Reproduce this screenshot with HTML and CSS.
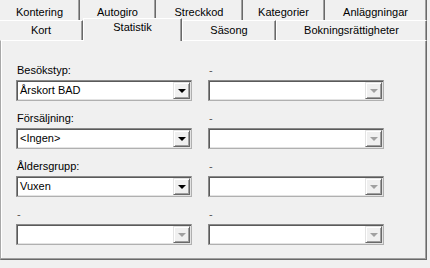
FILE: index.html
```html
<!DOCTYPE html>
<html>
<head>
<meta charset="utf-8">
<link rel="stylesheet" href="styles.css">
</head>
<body>
<div class="window">
  <div class="tabs">
    <div class="row row1">
      <div class="tab w80">Kontering</div>
      <div class="tab w76">Autogiro</div>
      <div class="tab w87">Streckkod</div>
      <div class="tab w82">Kategorier</div>
      <div class="tab w102">Anläggningar</div>
    </div>
    <div class="row row2">
      <div class="tab w83">Kort</div>
      <div class="tab w99 selected">Statistik</div>
      <div class="tab w94">Säsong</div>
      <div class="tab w151">Bokningsrättigheter</div>
    </div>
  </div>
  <div class="panel">
    <div class="grid">
      <div class="field">
        <div class="label">Besökstyp:</div>
        <div class="combo"><span class="value">Årskort BAD</span><span class="btn"><span class="arrow"></span></span></div>
      </div>
      <div class="field">
        <div class="label dash">-</div>
        <div class="combo disabled"><span class="value"></span><span class="btn"><span class="arrow"></span></span></div>
      </div>
      <div class="field">
        <div class="label">Försäljning:</div>
        <div class="combo"><span class="value">&lt;Ingen&gt;</span><span class="btn"><span class="arrow"></span></span></div>
      </div>
      <div class="field">
        <div class="label dash">-</div>
        <div class="combo disabled"><span class="value"></span><span class="btn"><span class="arrow"></span></span></div>
      </div>
      <div class="field">
        <div class="label">Åldersgrupp:</div>
        <div class="combo"><span class="value">Vuxen</span><span class="btn"><span class="arrow"></span></span></div>
      </div>
      <div class="field">
        <div class="label dash">-</div>
        <div class="combo disabled"><span class="value"></span><span class="btn"><span class="arrow"></span></span></div>
      </div>
      <div class="field">
        <div class="label dash">-</div>
        <div class="combo disabled"><span class="value"></span><span class="btn"><span class="arrow"></span></span></div>
      </div>
      <div class="field">
        <div class="label dash">-</div>
        <div class="combo disabled"><span class="value"></span><span class="btn"><span class="arrow"></span></span></div>
      </div>
    </div>
  </div>
</div>
</body>
</html>
```
FILE: styles.css
```css
html, body {
  margin: 0;
  padding: 0;
  background: #f0f0f0;
}
body {
  font-family: "Liberation Sans", Arial, sans-serif;
  font-size: 11px;
  line-height: 13px;
  color: #000;
}
.window {
  width: 427px;
}
.tabs {
  display: flex;
  flex-direction: column;
}
.row {
  display: flex;
  height: 20px;
}
.tab {
  box-sizing: border-box;
  height: 20px;
  text-align: center;
  background: #f0f0f0;
  border-right: 1px solid #696969;
  box-shadow: inset -1px 0 #a0a0a0;
  white-space: nowrap;
}
.row1 .tab {
  padding-top: 6px;
}
.row2 .tab {
  padding-top: 3px;
  border-top: 1px solid #ffffff;
}
.row2 .tab + .tab {
  border-left: 1px solid #ffffff;
}
.tab.selected {
  position: relative;
  z-index: 1;
  height: 23px;
  margin-top: -2px;
  padding-top: 2px;
  margin-bottom: -1px;
}
.w76 { width: 76px; }
.w80 { width: 80px; }
.w82 { width: 82px; }
.w83 { width: 83px; }
.w87 { width: 87px; }
.w94 { width: 94px; }
.w99 { width: 99px; }
.w102 { width: 102px; }
.w151 { width: 151px; }

.panel {
  box-sizing: border-box;
  height: 220px;
  border-top: 1px solid #ffffff;
  border-left: 1px solid #a8a8a8;
  border-right: 1px solid #696969;
  border-bottom: 1px solid #696969;
  box-shadow: inset -1px -1px #a0a0a0, inset 1px 0 #ffffff;
  padding: 23px 0 0 15px;
}
.grid {
  display: grid;
  grid-template-columns: 176px 176px;
  column-gap: 16px;
  row-gap: 11px;
}
.field {
  display: flex;
  flex-direction: column;
  gap: 3px;
}
.label {
  height: 13px;
  padding-left: 1px;
}
.label.dash {
  color: #555;
}
.combo {
  box-sizing: border-box;
  height: 21px;
  display: flex;
  align-items: stretch;
  background: #ffffff;
  border-top: 1px solid #8a8a8a;
  border-left: 1px solid #8a8a8a;
  border-right: 1px solid #b0b0b0;
  border-bottom: 1px solid #b0b0b0;
  box-shadow: inset 1px 1px #5a5a5a, inset -1px -1px #e3e3e3;
  padding: 1px;
}
.value {
  flex: 1;
  padding-left: 2px;
  line-height: 17px;
  white-space: nowrap;
  overflow: hidden;
}
.btn {
  box-sizing: border-box;
  width: 17px;
  display: flex;
  align-items: center;
  justify-content: center;
  background: #f0f0f0;
  border-top: 1px solid #e3e3e3;
  border-left: 1px solid #e3e3e3;
  border-right: 1px solid #696969;
  border-bottom: 1px solid #696969;
  box-shadow: inset 1px 1px #ffffff, inset -1px -1px #a0a0a0;
}
.arrow {
  width: 0;
  height: 0;
  border-left: 4px solid transparent;
  border-right: 4px solid transparent;
  border-top: 4px solid #000;
  margin-top: 1px;
}
.disabled .arrow {
  border-top-color: #a0a0a0;
}
```
